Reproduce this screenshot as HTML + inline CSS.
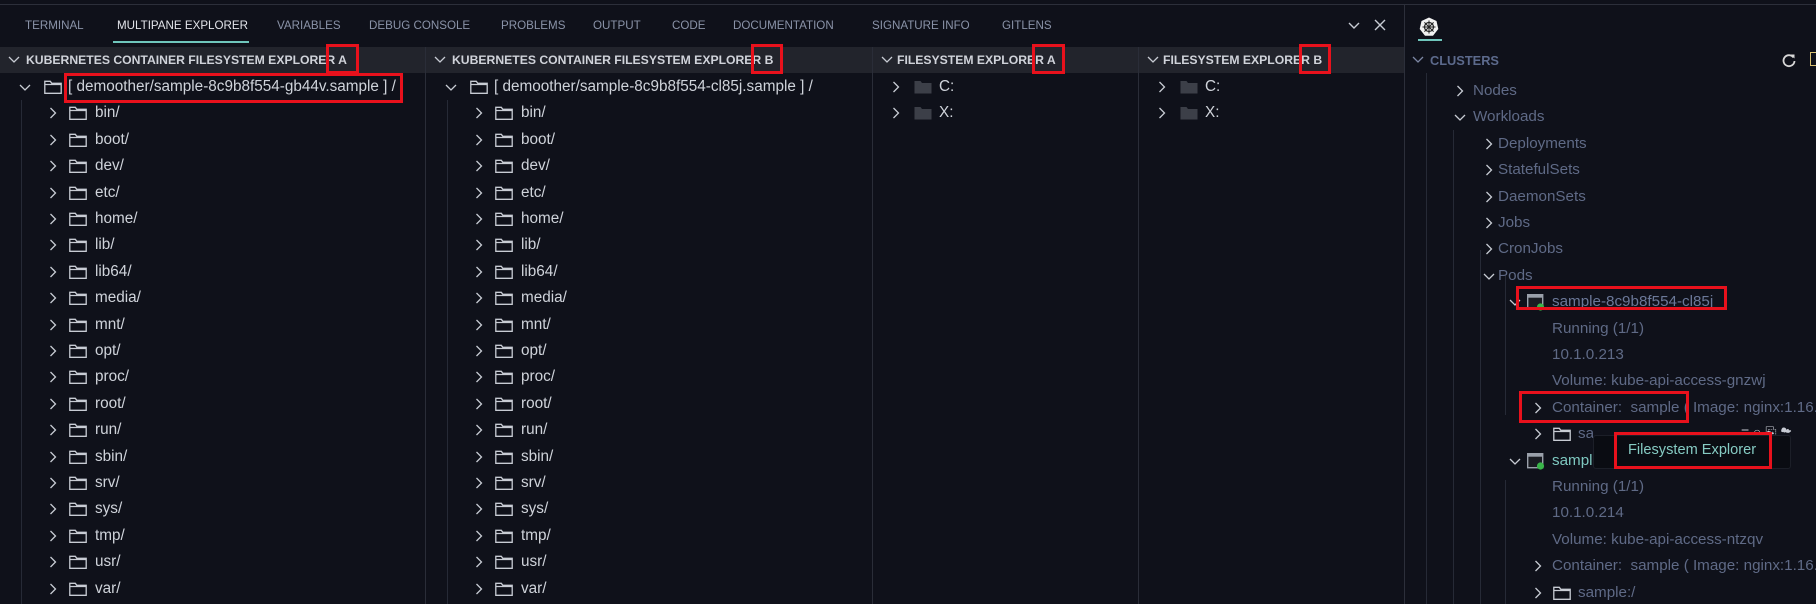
<!DOCTYPE html>
<html><head><meta charset="utf-8"><style>
*{margin:0;padding:0;box-sizing:border-box}
body{width:1816px;height:604px;background:#0f111a;overflow:hidden;position:relative;font-family:"Liberation Sans",sans-serif}
.a{position:absolute;white-space:nowrap}
.tab{position:absolute;top:19px;font-size:11.6px;color:#8a93a8;line-height:14px}
.hdr{position:absolute;top:47px;height:26px;background:#22242c}
.ht{position:absolute;top:6px;font-size:12.2px;font-weight:bold;color:#d0d3da;line-height:14px;white-space:nowrap}
.t{position:absolute;font-size:15.3px;color:#cfd3da;line-height:18px;white-space:nowrap}
.s{position:absolute;font-size:15.2px;color:#5f6a86;line-height:18px;white-space:nowrap}
.red{position:absolute;border:3px solid #e8111c}
.g{position:absolute;width:1px;background:#262a36}
svg{position:absolute;overflow:visible}
</style></head><body>
<div class="a" style="left:0;top:4px;width:1816px;height:1px;background:#2c2f3a"></div>
<div class="tab" style="left:25px">TERMINAL</div>
<div class="tab" style="left:117px;color:#e2e4ea">MULTIPANE EXPLORER</div>
<div class="a" style="left:113px;top:41px;width:136px;height:2px;background:#6fc6bc"></div>
<div class="tab" style="left:277px">VARIABLES</div>
<div class="tab" style="left:369px">DEBUG CONSOLE</div>
<div class="tab" style="left:501px">PROBLEMS</div>
<div class="tab" style="left:593px">OUTPUT</div>
<div class="tab" style="left:672px">CODE</div>
<div class="tab" style="left:733px">DOCUMENTATION</div>
<div class="tab" style="left:872px">SIGNATURE INFO</div>
<div class="tab" style="left:1002px">GITLENS</div>
<svg style="left:1348px;top:20px" width="12" height="12"><path d="M1 3l5 5 5-5" stroke="#c8ccd4" stroke-width="1.4" fill="none"/></svg>
<svg style="left:1374px;top:19px" width="12" height="12"><path d="M1 1l10 10M11 1L1 11" stroke="#c8ccd4" stroke-width="1.4" fill="none"/></svg>

<div class="a" style="left:425px;top:47px;width:1px;height:557px;background:#2a2d38"></div>
<div class="a" style="left:872px;top:47px;width:1px;height:557px;background:#2a2d38"></div>
<div class="a" style="left:1138px;top:47px;width:1px;height:557px;background:#2a2d38"></div>
<div class="a" style="left:1404px;top:5px;width:1px;height:599px;background:#2c2f3a"></div>
<div class="a" style="left:1400px;top:47px;width:4px;height:25px;background:#2c2f38"></div>

<div class="hdr" style="left:0;width:425px"><svg style="left:8px;top:8px" width="12" height="10"><path d="M1 2l5 5 5-5" stroke="#c8ccd4" stroke-width="1.3" fill="none"/></svg><div class="ht" style="left:26px">KUBERNETES CONTAINER FILESYSTEM EXPLORER A</div></div>
<div class="hdr" style="left:426px;width:446px"><svg style="left:8px;top:8px" width="12" height="10"><path d="M1 2l5 5 5-5" stroke="#c8ccd4" stroke-width="1.3" fill="none"/></svg><div class="ht" style="left:26px">KUBERNETES CONTAINER FILESYSTEM EXPLORER B</div></div>
<div class="hdr" style="left:873px;width:265px"><svg style="left:8px;top:8px" width="12" height="10"><path d="M1 2l5 5 5-5" stroke="#c8ccd4" stroke-width="1.3" fill="none"/></svg><div class="ht" style="left:24px">FILESYSTEM EXPLORER A</div></div>
<div class="hdr" style="left:1139px;width:265px"><svg style="left:8px;top:8px" width="12" height="10"><path d="M1 2l5 5 5-5" stroke="#c8ccd4" stroke-width="1.3" fill="none"/></svg><div class="ht" style="left:24px">FILESYSTEM EXPLORER B</div></div>

<div class="red" style="left:326px;top:44px;width:33px;height:30px"></div>
<div class="red" style="left:751px;top:44px;width:32px;height:30px"></div>
<div class="red" style="left:1032px;top:44px;width:33px;height:30px"></div>
<div class="red" style="left:1299px;top:44px;width:32px;height:30px"></div>

<div id="p"></div>

<svg style="left:1419px;top:17px" width="20" height="20" viewBox="0 0 20 20"><polygon points="10,0.5 17.5,4 19.3,12 14,18.8 6,18.8 0.7,12 2.5,4" fill="#f2f2f2"/><circle cx="10" cy="10" r="4.5" fill="none" stroke="#222" stroke-width="1.2"/><path d="M10 3.5v13M3.5 10h13M5.4 5.4l9.2 9.2M14.6 5.4l-9.2 9.2" stroke="#222" stroke-width="1"/></svg>
<div class="a" style="left:1418px;top:39px;width:24px;height:2px;background:#6fc6bc"></div>
<svg style="left:1412px;top:55px" width="12" height="10"><path d="M1 2l5 5 5-5" stroke="#7c87a4" stroke-width="1.3" fill="none"/></svg>
<div class="a" style="left:1430px;top:53px;font-size:12.8px;font-weight:bold;color:#5c6a8c">CLUSTERS</div>
<svg style="left:1781px;top:52px" width="16" height="16" viewBox="0 0 16 16"><path d="M12.5 5.5A5.5 5.5 0 1 0 13.5 9" stroke="#d8d8d8" stroke-width="1.8" fill="none"/><path d="M9.5 2.5l4 0 0 4z" fill="#d8d8d8"/></svg>
<div class="a" style="left:1810px;top:52px;width:8px;height:14px;border:1.5px solid #d8c070"></div>

<div class="red" style="left:1516px;top:286px;width:211px;height:24px"></div>
<div class="red" style="left:1519px;top:391px;width:170px;height:32px"></div>
<div class="a" style="left:1741px;top:424px;font-size:14px;color:#c8ccd4">≡ ○ ⎘ ☁</div>
<div class="a" style="left:1593px;top:435px;width:198px;height:34px;background:#0a0c12;border:1px solid #1c1f28;border-radius:3px"></div>
<div class="red" style="left:1614px;top:432px;width:158px;height:37px"></div>
<div class="a" style="left:1628px;top:442px;font-size:14.6px;color:#86cbc3">Filesystem Explorer</div>

<script>
var H='';
function chev(x,y,open,c){c=c||'#c8ccd4';return open?'<svg style="left:'+(x-1)+'px;top:'+(y-4)+'px" width="12" height="10"><path d="M1 2l5 5 5-5" stroke="'+c+'" stroke-width="1.3" fill="none"/></svg>':'<svg style="left:'+(x+1)+'px;top:'+(y-6)+'px" width="8" height="12"><path d="M1.5 1l5 5-5 5" stroke="'+c+'" stroke-width="1.3" fill="none"/></svg>';}
function fold(x,y,c){c=c||'#c8ccd4';return '<svg style="left:'+x+'px;top:'+(y-7)+'px" width="18" height="14" viewBox="0 0 18 14"><path d="M0.8 1.3h5.5l1.5 2h9.4v10H0.8z M0.8 4.5h16.4" stroke="'+c+'" stroke-width="1.3" fill="none"/></svg>';}
function sfold(x,y){return '<svg style="left:'+x+'px;top:'+(y-7)+'px" width="18" height="14" viewBox="0 0 18 14"><path d="M0.5 1h6l1.5 2h9.5v10.5H0.5z" fill="#3c3f48"/></svg>';}
var step=26.4,y0=87;
var dirs=['bin/','boot/','dev/','etc/','home/','lib/','lib64/','media/','mnt/','opt/','proc/','root/','run/','sbin/','srv/','sys/','tmp/','usr/','var/'];
[[0,'[ demoother/sample-8c9b8f554-gb44v.sample ] /'],[426,'[ demoother/sample-8c9b8f554-cl85j.sample ] /']].forEach(function(p){
 var L=p[0];
 H+=chev(L+20,y0,true)+fold(L+44,y0)+'<div class="t" style="left:'+(L+68)+'px;top:'+(y0-9)+'px">'+p[1]+'</div>';
 H+='<div class="g" style="left:'+(L+21)+'px;top:'+(y0+13)+'px;height:'+(604-y0-13)+'px"></div>';
 dirs.forEach(function(d,i){var y=Math.round(y0+(i+1)*step);
  H+=chev(L+48,y,false)+fold(L+69,y)+'<div class="t" style="left:'+(L+95)+'px;top:'+(y-9)+'px">'+d+'</div>';});
});
[873,1139].forEach(function(L){
 ['C:','X:'].forEach(function(d,i){var y=Math.round(y0+i*step);
  H+=chev(L+18,y,false)+sfold(L+41,y)+'<div class="t" style="left:'+(L+66)+'px;top:'+(y-9)+'px">'+d+'</div>';});
});
var sy=91;
var rows=[
[1,'c','Nodes'],[1,'o','Workloads'],[2,'c','Deployments'],[2,'c','StatefulSets'],[2,'c','DaemonSets'],[2,'c','Jobs'],[2,'c','CronJobs'],[2,'o','Pods'],
[3,'pod','sample-8c9b8f554-cl85j'],[4,'n','Running (1/1)'],[4,'n','10.1.0.213'],[4,'n','Volume: kube-api-access-gnzwj'],[4,'c','Container:&nbsp; sample ( Image: nginx:1.16.1 )'],[4,'f','sample:/'],
[3,'pod2','sampl'],[4,'n','Running (1/1)'],[4,'n','10.1.0.214'],[4,'n','Volume: kube-api-access-ntzqv'],[4,'c','Container:&nbsp; sample ( Image: nginx:1.16.1 )'],[4,'f','sample:/']];
var cx={1:1455,2:1484,3:1510,4:1533},tx={1:1473,2:1498,3:1552,4:1552};
H+='<div class="g" style="left:1426px;top:73px;height:531px"></div>';
H+='<div class="g" style="left:1453px;top:130px;height:474px"></div>';
H+='<div class="g" style="left:1480px;top:250px;height:354px"></div>';
H+='<div class="g" style="left:1505px;top:275px;height:140px"></div>';
H+='<div class="g" style="left:1505px;top:480px;height:124px"></div>';
rows.forEach(function(r,i){var y=Math.round(sy+i*step),lv=r[0],k=r[1],txt=r[2];
 if(k=='c')H+=chev(cx[lv],y,false,'#c8ccd4');
 if(k=='o')H+=chev(cx[lv],y,true,'#c8ccd4');
 if(k=='pod'||k=='pod2'){H+=chev(cx[lv],y,true,'#c8ccd4')+'<svg style="left:1527px;top:'+(y-8)+'px" width="18" height="17"><rect x="0.7" y="0.7" width="15" height="14" fill="#1a1c22" stroke="#9aa0aa" stroke-width="1.4"/><rect x="0.7" y="0.7" width="15" height="3" fill="#9aa0aa"/><circle cx="13.5" cy="13" r="3.6" fill="#3ab54a"/></svg>';}
 var x=tx[lv],col='#5f6a86';
 if(k=='f'){H+=chev(cx[lv],y,false,'#c8ccd4')+fold(1553,y,'#c8ccd4');x=1578;}
 if(k=='pod2')col='#7ec8c0';
 if(k=='pod')col='#6b7898';
 if(i==13)txt='sa';
 H+='<div class="s" style="left:'+x+'px;top:'+(y-9)+'px;color:'+col+'">'+txt+'</div>';
});
document.getElementById('p').innerHTML=H;
</script>
<div class="red" style="left:64px;top:73px;width:339px;height:30px"></div>
</body></html>
